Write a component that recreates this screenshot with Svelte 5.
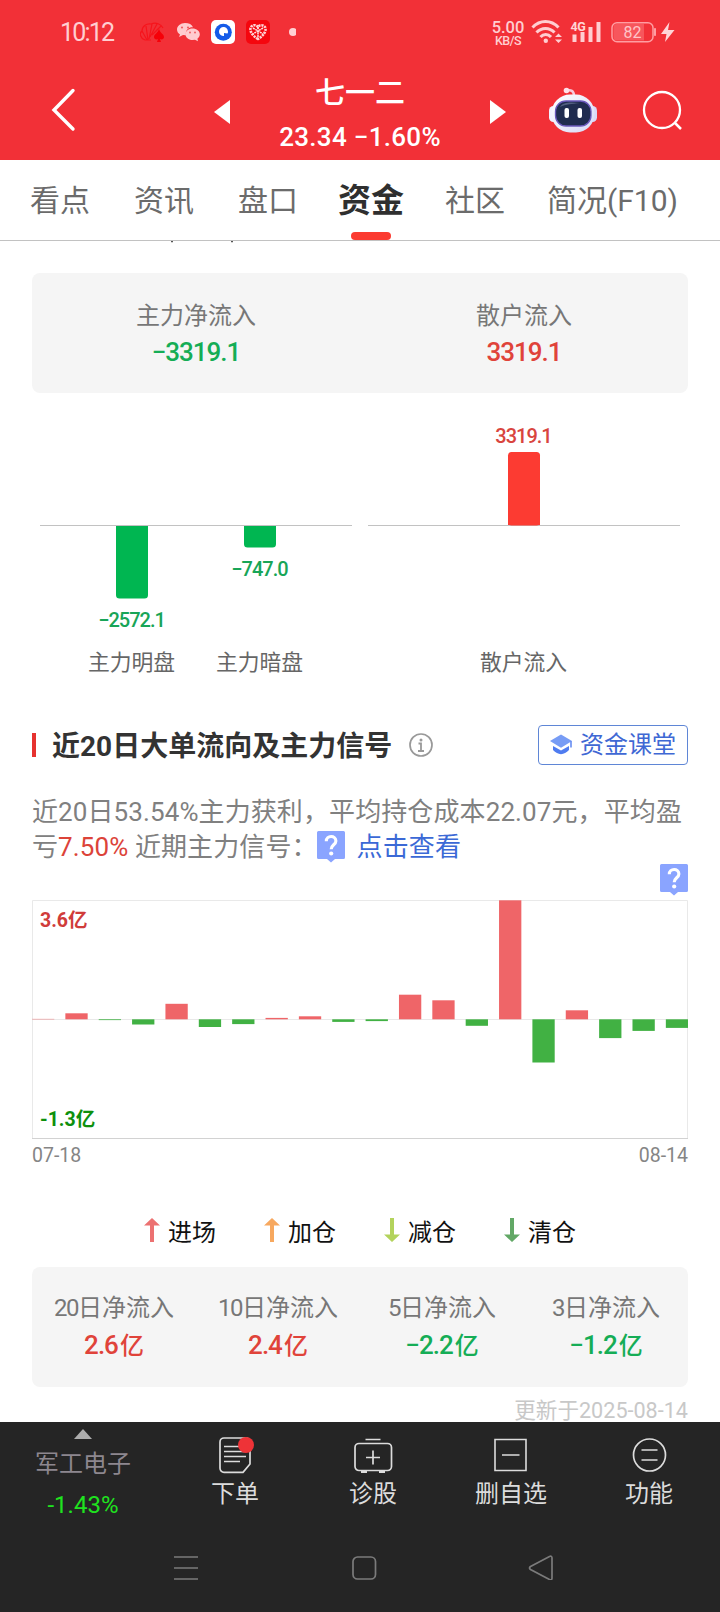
<script lang="ts">
	interface Stat {
		days?: string;
		label: string;
		value: string;
		unit?: string;
		up: boolean;
	}

	const tabs = ['看点', '资讯', '盘口', '资金', '社区', '简况(F10)'];
	let active = $state('资金');

	const summary: Stat[] = [
		{ label: '主力净流入', value: '−3319.1', up: false },
		{ label: '散户流入', value: '3319.1', up: true }
	];

	const periods: Stat[] = [
		{ days: '20', label: '日净流入', value: '2.6', unit: '亿', up: true },
		{ days: '10', label: '日净流入', value: '2.4', unit: '亿', up: true },
		{ days: '5', label: '日净流入', value: '−2.2', unit: '亿', up: false },
		{ days: '3', label: '日净流入', value: '−1.2', unit: '亿', up: false }
	];

	// Bars around the zero line, x is the centre of the bar.
	const flows = [
		{ x: 100, y: 134, h: 72, label: '−2572.1', labelY: 234, name: '主力明盘', up: false },
		{ x: 228, y: 134, h: 21, label: '−747.0', labelY: 183, name: '主力暗盘', up: false },
		{ x: 492, y: 60, h: 73, label: '3319.1', labelY: 50, name: '散户流入', up: true }
	];

	// Daily net flow in chart pixels, 07-18 to 08-14.
	const daily = [
		0.4, 6, -0.8, -5.2, 15.5, -7.7, -4.8, 1.4, 3, -2.6, -1.8, 24.6, 19, -6.5, 119, -43.2, 9, -18.8, -11.6, -8.6
	];
	const pitch = 33.36;

	const legend = [
		{ label: '进场', color: '#ec7171', up: true },
		{ label: '加仓', color: '#f7a85f', up: true },
		{ label: '减仓', color: '#b3d35c', up: false },
		{ label: '清仓', color: '#62a866', up: false }
	];
</script>

{#snippet hint()}
	<svg class="hint" width="28" height="32" viewBox="0 0 28 32">
		<path d="M1.5 0h25A1.5 1.5 0 0 1 28 1.5v25a1.5 1.5 0 0 1-1.5 1.5H18l-4 3.5L10 28H1.5A1.5 1.5 0 0 1 0 26.5v-25A1.5 1.5 0 0 1 1.5 0z" fill="#8aa4ff" />
		<path d="M9.3 10.2c0-6.2 9.6-6.2 9.6-.3 0 3.8-4.7 4-4.7 8.3" fill="none" stroke="#fff" stroke-width="3.1" />
		<circle cx="14.2" cy="22.5" r="2.1" fill="#fff" />
	</svg>
{/snippet}

<div class="page">
	<header>
		<div class="status">
			<span class="time">10:12</span>
			<svg class="apps" width="156" height="26" viewBox="0 0 156 26">
				<path
					d="M5 21C0 19-1 14 2 12c0-5 5-8 9-7 5-2 10 0 12 4M5 21h6M7 21 2 12M8 21 6 7M9 20l3-15M10 18l7-13M12 16l9-9"
					fill="none"
					stroke="#f6141c"
					stroke-width="1.2"
				/>
				<path d="M19 10c1 4 5 5 5 8 0 2-2 3-4 2l1 3h-4l1-3c-2 1-4 0-4-2 0-3 4-4 5-8z" fill="#f60008" />
				<g fill="#ffccd0">
					<path d="M45 4c-4.500 0-8 3-8 6.500 0 2.300 1.300 4 3 5L39 18l4-2 3 .3c-1-6 4-8.500 7-8C52 5.500 49 4 45 4z" />
					<path d="M52.500 9.500c-4 0-7 2.600-7 5.800s3 5.800 7 5.800l2.500-.4 3 1.600-.6-2.500c1.500-1.200 2.400-2.600 2.400-4.500 0-3.200-3.300-5.800-7.300-5.800z" />
				</g>
				<g fill="#f06066">
					<circle cx="42" cy="8.5" r="1.1" /><circle cx="48" cy="8.5" r="1.1" />
					<circle cx="50" cy="13.5" r="1" /><circle cx="55" cy="13.5" r="1" />
				</g>
				<rect x="71" y="1" width="24" height="24" rx="5" fill="#fff" />
				<circle cx="83.3" cy="13.3" r="8.5" fill="#155be8" />
				<path d="M79 13a4.500 4.500 0 1 1 8.500 1.500L84 14v3a4.500 4.500 0 0 1-5-4z" fill="#fff" />
				<rect x="106" y="1" width="24" height="24" rx="5" fill="#f5060e" />
				<path d="M118 20c-5-3-8-7-7.500-10.500C111 6 116 5 118 8c2-3 7-2 7.500 1.500C126 13 123 17 118 20z" fill="none" stroke="#ffd0d2" stroke-width="2.6" stroke-dasharray="2.2 .8" />
				<path d="m113 9 10 6m0-6-10 6m5-7v10" stroke="#ffe0e1" stroke-width="1.5" stroke-dasharray="2 .7" />
				<circle cx="153" cy="13" r="4" fill="#ffd0d3" />
			</svg>
			<div class="speed">
				<b>5.00</b>
				<span>KB/S</span>
			</div>
			<svg class="signals" width="148" height="28" viewBox="0 0 148 28">
				<g fill="none" stroke="#ffced1" stroke-width="3">
					<path d="M1.500 9.500c7.500-8 18.500-8 26 0M5.500 14.500c5-5.500 13-5.500 18 0M9.500 19c3-3.500 7.500-3.500 10.500 0" />
				</g>
				<circle cx="14.8" cy="22.7" r="2.2" fill="#ffced1" />
				<path d="m27.500 15.500 3.500 3.500h-7zM27.500 25l3.500-3.500h-7z" fill="#ffced1" />
				<path d="M41.500 16.500h4V24h-4zM49.500 14h4v10h-4zM57.500 9h4v15h-4zM65.500 4h4v20h-4z" fill="#ffced1" />
				<text x="39.5" y="13" class="net">4G</text>
				<rect x="81" y="4.8" width="41" height="19" rx="5" fill="none" stroke="#ff9da2" stroke-width="1.5" />
				<path d="M82.500 9a3 3 0 0 1 3-3H113v16.500H85.500a3 3 0 0 1-3-3z" fill="#f7565c" />
				<path d="M123.500 10.500h1v7h-1z" fill="#ff9da2" stroke="#ff9da2" />
				<text x="101.5" y="20" class="charge">82</text>
				<path d="m138.500 4-8.500 12h5.500l-1.500 8 9.500-12H137z" fill="#ffd5d7" />
			</svg>
		</div>
		<div class="head">
			<svg width="26" height="46" viewBox="0 0 26 46">
				<path d="M23 3.500 4 23l19 19" fill="none" stroke="#fff" stroke-width="3.4" stroke-linecap="round" />
			</svg>
			<svg class="prev" width="16" height="24" viewBox="0 0 16 24"><path d="M16 0v24L0 12z" fill="#fff" /></svg>
			<div class="stock">
				<h1>七一二</h1>
				<div class="quote">23.34 −1.60%</div>
			</div>
			<svg class="next" width="16" height="24" viewBox="0 0 16 24"><path d="M0 0v24l16-12z" fill="#fff" /></svg>
			<svg class="robot" width="50" height="46" viewBox="0 0 50 46">
				<defs>
					<linearGradient id="shell" x1="0" y1="0" x2="1" y2="1">
						<stop offset="0" stop-color="#fff" />
						<stop offset="1" stop-color="#d7d9f7" />
					</linearGradient>
				</defs>
				<path d="M18 4c5-2 8 0 8 5" fill="none" stroke="#f7c9dc" stroke-width="2.5" />
				<circle cx="18.5" cy="3.5" r="2.8" fill="#ffdfe8" />
				<rect x="1" y="19" width="9" height="16" rx="4.5" fill="#f2f1ff" />
				<rect x="40" y="19" width="9" height="16" rx="4.5" fill="#dad8f7" />
				<rect x="3.5" y="7.5" width="43" height="38" rx="18.5" fill="url(#shell)" />
				<rect x="7.5" y="14" width="35.5" height="25" rx="10.5" fill="#202c4f" stroke="#6a58bb" stroke-width="1.3" />
				<path d="M12 20c3-5 10-5 20-4-8 1-14 1-20 4z" fill="#536080" />
				<rect x="16.5" y="21" width="4.5" height="10" rx="2" fill="#fff" />
				<rect x="29.5" y="21" width="4.5" height="10" rx="2" fill="#fff" />
			</svg>
			<svg class="search" width="42" height="42" viewBox="0 0 42 42">
				<circle cx="20" cy="21" r="18" fill="none" stroke="#fff" stroke-width="2.3" />
				<path d="m32.500 33.500 6.500 6.500" stroke="#fff" stroke-width="2.5" />
			</svg>
		</div>
	</header>

	<nav class="tabs">
		{#each tabs as tab (tab)}
			<button class:active={tab === active} onclick={() => (active = tab)}>{tab}</button>
		{/each}
	</nav>

	<main>
		<svg class="cut" width="656" height="2" viewBox="0 0 656 2"><path d="M139 0h2v1.300h-2zM199 0h2v1.300h-2z" fill="#555" /></svg>
		<section class="card">
			{#each summary as s (s.label)}
				<div class="stat">
					<span>{s.label}</span>
					<strong class="num" class:up={s.up}>{s.value}</strong>
				</div>
			{/each}
		</section>

		<svg class="flows" width="656" height="318" viewBox="0 0 656 318">
			<path d="M8 132.500h312M336 132.500h312" stroke="#c2c2c2" />
			{#each flows as f (f.name)}
				<g fill={f.up ? '#fc3b32' : '#00b651'}>
					<rect x={f.x - 16} y={f.y - 1} width="32" height={f.h + 0.5} rx="3.5" />
					<rect x={f.x - 16} y={f.up ? f.y + f.h - 9 : f.y - 1} width="32" height="8" />
				</g>
				<text class="amount" class:up={f.up} x={f.x - 0.5} y={f.labelY}>{f.label}</text>
				<text class="name" x={f.x - 0.5} y="277">{f.name}</text>
			{/each}
		</svg>

		<div class="title">
			<i></i>
			<h2>近20日大单流向及主力信号</h2>
			<svg width="24" height="24" viewBox="0 0 24 24" fill="none" stroke="#999">
				<circle cx="12" cy="12" r="11" stroke-width="1.7" />
				<path d="M9.500 10.500H12V18M9 18h6" stroke-width="1.8" />
				<circle cx="12" cy="7" r="1.5" fill="#999" stroke="none" />
			</svg>
			<button class="lesson">
				<svg width="24" height="22" viewBox="0 0 24 22">
					<path d="M12 .5 1 7l11 6.700L23 7z" fill="#779cf5" />
					<path d="M4 12v4c5 5.500 11 5.500 16 0v-4l-8 4.600z" fill="#4f7cf0" />
					<path d="M22 7v6.500" stroke="#658cf2" stroke-width="1.6" />
				</svg>
				资金课堂
			</button>
		</div>

		<p>
			近20日53.54%主力获利，平均持仓成本22.07元，平均盈<br /><span class="second"
				>亏<em>7.50%</em> 近期主力信号：{@render hint()}<a href="#signal">点击查看</a></span
			>
		</p>
		<div class="marker">{@render hint()}</div>

		<svg class="daily" width="656" height="239" viewBox="0 0 656 239">
			<path d="M.5 238V.5h655V238M0 119.500h656" fill="none" stroke="#e9e9e9" />
			<path d="M0 238.500h656" stroke="#d2d2d2" />
			{#each daily as v, i}
				<rect
					x={i * pitch}
					y={v > 0 ? 119.3 - v : 119.3}
					width="22.3"
					height={Math.abs(v)}
					fill={v > 0 ? '#ef6568' : '#41b143'}
				/>
			{/each}
			<text x="8" y="27" fill="#d03c3a">3.6亿</text>
			<text x="8" y="226" fill="#0d900d">-1.3亿</text>
		</svg>
		<div class="dates"><span>07-18</span><span>08-14</span></div>

		<div class="legend">
			{#each legend as l (l.label)}
				<span>
					<svg width="16" height="24" viewBox="0 0 16 24">
						<path d="M8 0 0 7.500h6V24h4V7.500h6z" fill={l.color} transform={l.up ? undefined : 'rotate(180 8 12)'} />
					</svg>
					{l.label}
				</span>
			{/each}
		</div>

		<section class="card periods">
			{#each periods as s (s.days)}
				<div class="stat">
					<span><span class="num">{s.days}</span>{s.label}</span>
					<strong class:up={s.up}><span class="num">{s.value}</span><small>{s.unit}</small></strong>
				</div>
			{/each}
		</section>
		<div class="updated">更新于2025-08-14</div>
	</main>

	<footer>
		<div class="actions">
			<div class="sector">
				<svg width="18" height="10" viewBox="0 0 18 10"><path d="m9 0 9 10H0z" fill="#adadad" /></svg>
				<span>军工电子</span>
				<b>-1.43%</b>
			</div>
			<div class="action">
				<svg width="40" height="38" viewBox="0 0 40 38" fill="none" stroke="#dcdcdc" stroke-width="1.7">
					<path d="M9 2h22a4 4 0 0 1 4 4v22l-7 8.300H9a4 4 0 0 1-4-4V6a4 4 0 0 1 4-4z" />
					<path d="M9 10.500h16M9 15.500h22M9 20.500h22M9 25.500h16" />
					<circle cx="31" cy="9" r="8" fill="#ee3337" stroke="none" />
				</svg>
				下单
			</div>
			<div class="action">
				<svg width="40" height="38" viewBox="0 0 40 38" fill="none" stroke="#dcdcdc" stroke-width="1.7">
					<path d="M12.500 3.500h15M20 14.500v14M13 21.500h14" />
					<rect x="2" y="7.5" width="36.5" height="27" rx="4" />
					<path d="M8 35.800h6M26 35.800h6" stroke-width="2.4" />
				</svg>
				诊股
			</div>
			<div class="action">
				<svg width="40" height="38" viewBox="0 0 40 38" fill="none" stroke="#dcdcdc" stroke-width="1.6">
					<path d="M4 3.500h31v31H4zM11 19h17.500" />
				</svg>
				删自选
			</div>
			<div class="action">
				<svg width="40" height="38" viewBox="0 0 40 38" fill="none" stroke="#dcdcdc" stroke-width="1.7">
					<circle cx="20.5" cy="19" r="16" />
					<path d="M12.500 14h16M12.500 24h16" />
				</svg>
				功能
			</div>
		</div>
		<svg class="keys" width="720" height="26" viewBox="0 0 720 26" fill="none" stroke="#7b7b7b" stroke-width="1.7">
			<path d="M174 3h24M174 14h24M174 25h24" />
			<rect x="353" y="3" width="22.5" height="22" rx="4.5" />
			<path d="m530.500 12.500 19-10q2.500-1 2.500 1.500v20q0 2.500-2.500 1.500l-19-10q-2-1.500 0-3z" />
		</svg>
	</footer>
</div>

<style>
	:global(body) {
		margin: 0;
		background: #fff;
	}
	.page {
		width: 720px;
		height: 1612px;
		display: flex;
		flex-direction: column;
		overflow: hidden;
		font-family: Roboto, 'Noto Sans CJK SC', sans-serif;
		color: #333;
	}
	svg {
		display: block;
		flex: none;
	}
	button {
		border: none;
		background: none;
		padding: 0;
		font: inherit;
		color: inherit;
	}
	.num {
		letter-spacing: -1px;
	}

	header {
		height: 160px;
		background: #f23037;
		color: #fff;
	}
	.status {
		display: flex;
		height: 64px;
		padding-left: 60px;
		box-sizing: border-box;
	}
	.time {
		width: 80px;
		font-size: 25px;
		line-height: 66px;
		letter-spacing: -1.8px;
		color: #ffced1;
	}
	.apps {
		margin-top: 19px;
	}
	.speed {
		display: flex;
		flex-direction: column;
		align-items: center;
		width: 36px;
		margin: 18px 0 0 194px;
		color: #ffced1;
	}
	.speed b {
		font-size: 16.5px;
		font-weight: 500;
		line-height: 19px;
	}
	.speed span {
		font-size: 12.5px;
		font-weight: 500;
		line-height: 7px;
		letter-spacing: -0.5px;
	}
	.signals {
		margin: 18px 0 0 5px;
	}
	.net {
		font-size: 12.5px;
		font-weight: 700;
		letter-spacing: -0.5px;
		fill: #ffd5d7;
	}
	.charge {
		font-size: 16px;
		text-anchor: middle;
		fill: #ffc5c8;
	}
	.head {
		display: flex;
		height: 96px;
		padding-left: 50px;
		align-items: center;
	}
	.head > svg {
		margin-bottom: 4px;
	}
	.head .prev {
		margin: 0 0 0 138px;
	}
	.head .next {
		margin: 0;
	}
	.stock {
		display: flex;
		flex-direction: column;
		align-items: center;
		width: 260px;
	}
	h1 {
		margin: 5px 0 0;
		font-size: 30px;
		font-weight: 500;
		line-height: 44px;
	}
	.quote {
		font-size: 26px;
		font-weight: 500;
		line-height: 44px;
		letter-spacing: 0.3px;
	}
	.head .robot {
		margin-left: 42px;
	}
	.head .search {
		margin-left: 44px;
	}

	.tabs {
		display: flex;
		gap: 44px;
		height: 80px;
		padding-left: 30px;
		border-bottom: 1px solid #c2c2c2;
	}
	.tabs button {
		position: relative;
		height: 80px;
		flex: none;
		font-size: 30px;
		line-height: 82px;
		color: #6b6b6b;
	}
	.tabs button:last-child {
		margin-left: -2px;
	}
	.tabs .active {
		margin: 0 -3px 0 -4px;
		font-size: 33px;
		font-weight: 700;
		color: #2f2f2f;
	}
	.tabs .active::after {
		content: '';
		position: absolute;
		left: 13px;
		bottom: 0;
		width: 40px;
		height: 8px;
		border-radius: 4px;
		background: #fb3a30;
	}

	main {
		height: 1181px;
		padding: 0 32px;
		overflow: hidden;
	}
	.cut {
		margin-bottom: 30px;
	}
	.card {
		display: flex;
		height: 120px;
		border-radius: 8px;
		background: #f5f5f5;
	}
	.stat {
		flex: 1;
		display: flex;
		flex-direction: column;
		align-items: center;
		padding-top: 25px;
		font-size: 24px;
		line-height: 37px;
		color: #777;
	}
	.periods .stat {
		padding-top: 23px;
	}
	.periods strong {
		margin-top: 1px;
	}
	.stat span .num {
		letter-spacing: -1.4px;
	}
	.stat strong {
		font-size: 26px;
		font-weight: 500;
		line-height: 35px;
		color: #15ad56;
	}
	.stat small {
		font-size: 24px;
		margin-left: 2px;
	}
	.stat strong.up {
		color: #e0433a;
	}
	.amount {
		font-size: 20px;
		font-weight: 500;
		letter-spacing: -1px;
		text-anchor: middle;
		fill: #18a557;
	}
	.amount.up {
		fill: #d9453e;
	}
	.name {
		font-size: 21.8px;
		text-anchor: middle;
		fill: #666;
	}

	.title {
		display: flex;
		align-items: center;
		height: 68px;
	}
	.title i {
		width: 4px;
		height: 24px;
		margin-right: 16px;
		background: #e6322f;
	}
	h2 {
		margin: 4px 17px 0 0;
		font-size: 28px;
		font-weight: 700;
		line-height: 40px;
	}
	.lesson {
		display: flex;
		align-items: center;
		gap: 7px;
		width: 150px;
		height: 40px;
		margin-left: auto;
		padding-left: 10px;
		box-sizing: border-box;
		border: 1.5px solid #5f86d6;
		border-radius: 4px;
		font-size: 24px;
		line-height: 36px;
		color: #3f68d4;
	}

	p {
		margin: 16px 0 0;
		height: 69px;
		font-size: 26px;
		line-height: 35px;
		letter-spacing: 0.1px;
		white-space: nowrap;
		color: #808080;
	}
	.second {
		letter-spacing: 0.1px;
	}
	em {
		font-style: normal;
		color: #dc4339;
	}
	p .hint {
		display: inline-block;
		vertical-align: 3px;
		margin: -10px 12px -10px -1px;
	}
	a {
		color: #3b69d6;
		text-decoration: none;
	}
	.marker {
		display: flex;
		justify-content: flex-end;
		height: 36px;
	}
	.daily text {
		font-size: 19.5px;
		font-weight: 700;
	}
	.dates {
		display: flex;
		justify-content: space-between;
		font-size: 19.5px;
		line-height: 34px;
		color: #858585;
	}
	.legend {
		display: flex;
		padding-left: 112px;
		height: 94px;
	}
	.legend span {
		display: flex;
		align-items: center;
		gap: 8px;
		width: 120px;
		height: 36px;
		margin-top: 39px;
		font-size: 24px;
		color: #111;
	}
	.updated {
		font-size: 21.6px;
		line-height: 32px;
		margin-top: 8px;
		text-align: right;
		color: #c8c8c8;
	}

	footer {
		height: 190px;
		background: #252525;
	}
	.actions {
		display: flex;
		height: 132px;
		padding-right: 2px;
		color: #dcdcdc;
	}
	.sector {
		display: flex;
		flex-direction: column;
		align-items: center;
		width: 166px;
		padding-top: 7px;
		font-size: 24px;
	}
	.sector span {
		margin-top: 7px;
		line-height: 36px;
		color: #8d878f;
	}
	.sector b {
		margin-top: 6px;
		font-weight: 400;
		line-height: 34px;
		color: #1fe31f;
	}
	.action {
		flex: 1;
		display: flex;
		flex-direction: column;
		align-items: center;
		padding-top: 14px;
		font-size: 24px;
		line-height: 41px;
	}
</style>
